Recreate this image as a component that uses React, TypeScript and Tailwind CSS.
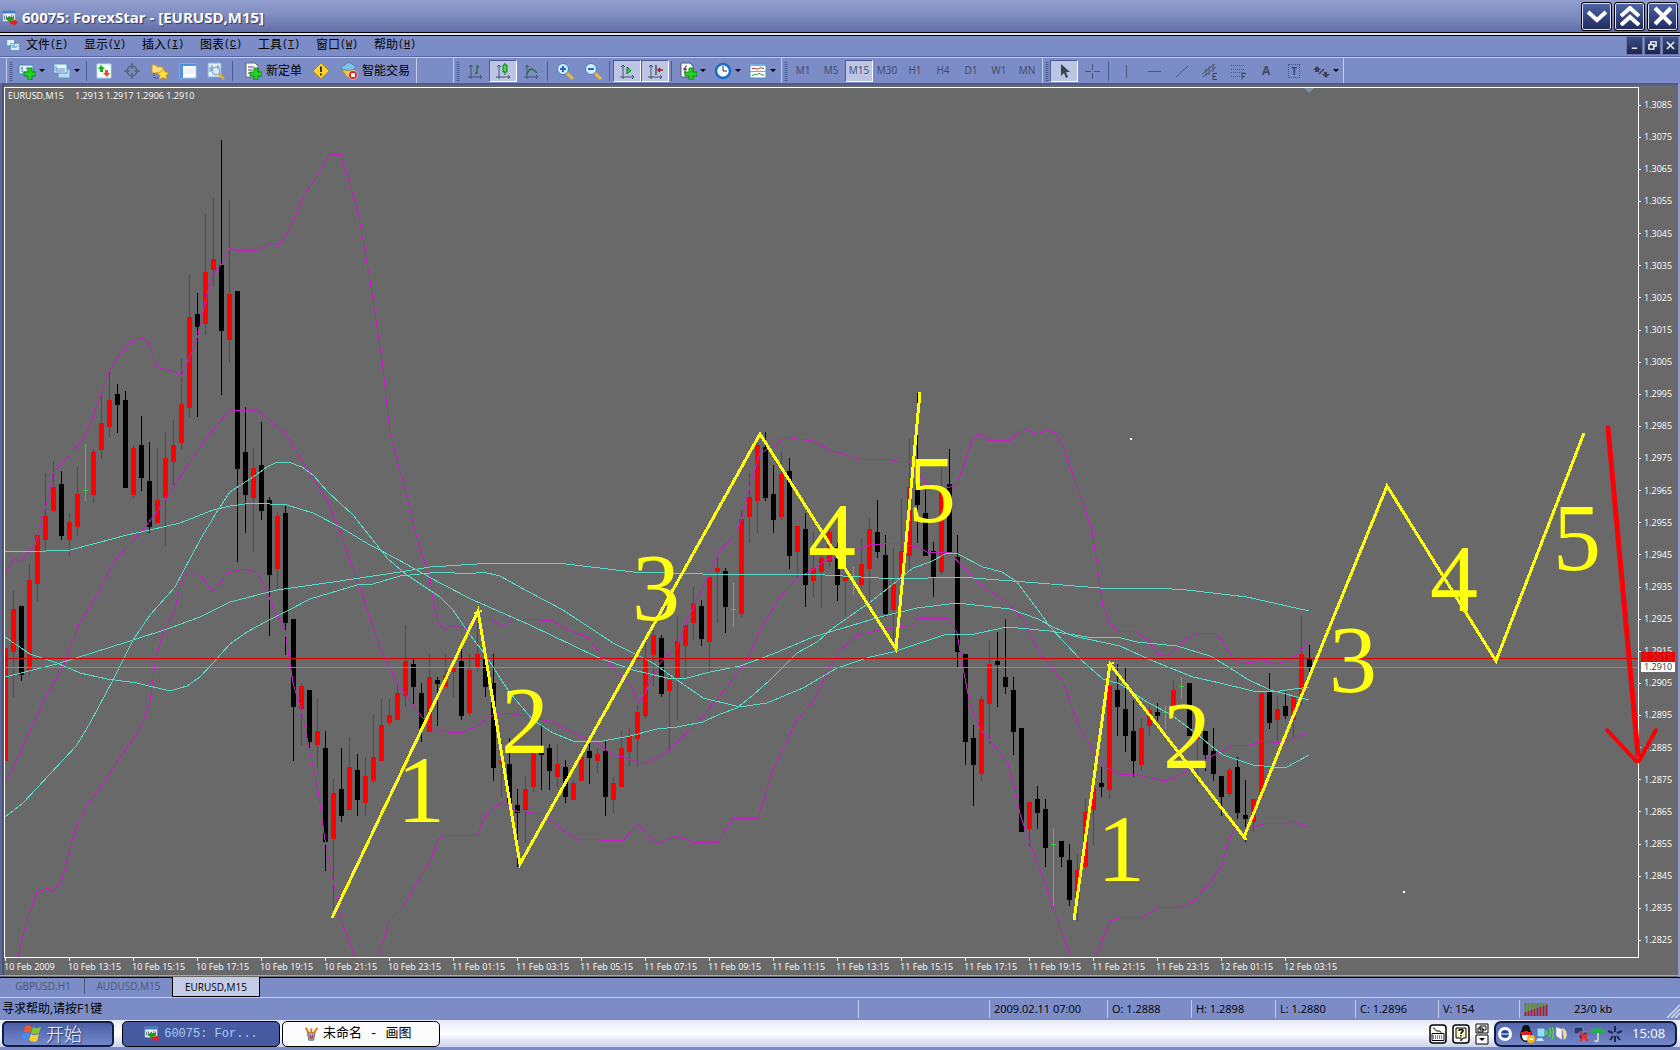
import clsx from "clsx"
import type { ReactNode } from "react"

// r = up bar, k = down bar, g = doji. [type, high, body top, body bottom, low]
type Candle = [string, number, number, number, number]

const candles: Candle[] = [
  ["r", 648, 648, 761, 761], ["r", 591, 609, 652, 697], ["k", 606, 606, 675, 681], ["r", 564, 580, 670, 675],
  ["r", 535, 535, 584, 601], ["r", 473, 516, 540, 549], ["r", 461, 487, 511, 512], ["k", 471, 484, 536, 540],
  ["r", 513, 522, 540, 556], ["r", 467, 494, 527, 536], ["g", 444, 490, 491, 501], ["r", 449, 452, 495, 503],
  ["r", 396, 423, 450, 459], ["r", 372, 400, 427, 437], ["k", 384, 394, 405, 433], ["k", 391, 400, 488, 488],
  ["r", 445, 448, 495, 498], ["k", 416, 445, 478, 491], ["k", 442, 481, 527, 533], ["r", 448, 500, 523, 523],
  ["r", 432, 458, 498, 546], ["r", 420, 445, 462, 485], ["r", 359, 404, 443, 449], ["r", 274, 317, 408, 417],
  ["k", 293, 314, 327, 417], ["r", 214, 272, 324, 335], ["r", 198, 259, 270, 287], ["k", 140, 265, 331, 395],
  ["r", 200, 294, 340, 363], ["k", 291, 291, 469, 562], ["k", 407, 452, 495, 533], ["r", 448, 468, 498, 552],
  ["k", 422, 465, 511, 520], ["k", 497, 500, 575, 636], ["r", 512, 516, 569, 589], ["k", 506, 513, 623, 655],
  ["k", 619, 619, 707, 761], ["r", 683, 686, 709, 745], ["k", 690, 690, 742, 749], ["r", 698, 731, 745, 768],
  ["k", 731, 748, 842, 871], ["r", 779, 793, 839, 910], ["k", 748, 789, 816, 822], ["r", 737, 767, 810, 810],
  ["k", 754, 770, 800, 816], ["r", 757, 776, 803, 816], ["r", 714, 757, 781, 783], ["r", 699, 725, 761, 761],
  ["r", 699, 715, 723, 726], ["r", 683, 693, 720, 720], ["r", 625, 661, 696, 707], ["k", 658, 664, 687, 704],
  ["k", 683, 693, 729, 742], ["r", 654, 677, 732, 732], ["k", 677, 680, 684, 726], ["r", 654, 675, 687, 687],
  ["r", 660, 667, 672, 697], ["k", 647, 661, 716, 720], ["r", 654, 670, 713, 716], ["r", 612, 654, 668, 672],
  ["k", 657, 659, 687, 697], ["k", 654, 683, 768, 781], ["r", 740, 760, 764, 797], ["k", 738, 764, 803, 803],
  ["k", 789, 805, 813, 867], ["r", 776, 789, 810, 843], ["r", 753, 753, 787, 792], ["k", 725, 751, 755, 790],
  ["k", 744, 748, 771, 790], ["r", 744, 764, 777, 788], ["k", 760, 767, 797, 803], ["r", 780, 783, 800, 800],
  ["r", 753, 757, 781, 781], ["k", 742, 751, 758, 784], ["r", 748, 754, 761, 773], ["k", 741, 751, 797, 816],
  ["r", 777, 783, 800, 813], ["r", 731, 748, 787, 787], ["r", 728, 736, 752, 767], ["r", 705, 712, 739, 767],
  ["r", 640, 659, 716, 719], ["r", 630, 635, 655, 687], ["k", 635, 638, 694, 697], ["r", 675, 680, 691, 751],
  ["r", 616, 641, 679, 720], ["r", 623, 625, 646, 677], ["r", 587, 603, 623, 640], ["k", 600, 606, 639, 646],
  ["r", 577, 577, 642, 673], ["r", 557, 568, 572, 623], ["k", 568, 571, 607, 633], ["g", 583, 609, 610, 627],
  ["r", 510, 519, 614, 617], ["r", 473, 497, 517, 543], ["r", 440, 445, 501, 533], ["k", 432, 447, 498, 501],
  ["k", 465, 494, 520, 533], ["r", 452, 474, 517, 520], ["k", 458, 471, 556, 569], ["r", 526, 526, 552, 577],
  ["k", 513, 529, 585, 607], ["r", 532, 568, 581, 597], ["r", 547, 558, 572, 608], ["r", 523, 532, 562, 567],
  ["k", 543, 547, 585, 601], ["r", 573, 577, 581, 617], ["g", 567, 580, 581, 595], ["r", 538, 564, 585, 588],
  ["r", 518, 529, 569, 603], ["k", 500, 532, 552, 558], ["k", 535, 555, 614, 617], ["r", 548, 584, 610, 647],
  ["r", 499, 551, 580, 580], ["r", 439, 487, 556, 570], ["k", 393, 484, 505, 543], ["k", 488, 513, 556, 556],
  ["k", 542, 551, 577, 597], ["r", 463, 490, 572, 575], ["k", 449, 484, 552, 552], ["k", 535, 557, 652, 668],
  ["k", 654, 654, 742, 765], ["k", 725, 738, 765, 806], ["r", 696, 699, 774, 781], ["r", 640, 664, 704, 744],
  ["k", 632, 661, 665, 707], ["k", 619, 677, 687, 694], ["k", 677, 690, 732, 755], ["k", 728, 728, 832, 832],
  ["r", 802, 802, 829, 847], ["k", 786, 799, 813, 829], ["k", 799, 809, 848, 867], ["g", 828, 844, 845, 906],
  ["k", 841, 841, 857, 867], ["k", 844, 860, 900, 906], ["r", 854, 870, 900, 921], ["r", 799, 812, 867, 867],
  ["r", 766, 788, 810, 845], ["k", 767, 783, 787, 797], ["r", 686, 686, 790, 799], ["k", 664, 690, 707, 736],
  ["k", 667, 709, 736, 752], ["k", 700, 731, 761, 777], ["r", 719, 728, 765, 771], ["r", 706, 710, 726, 736],
  ["k", 703, 712, 716, 721], ["g", 706, 712, 713, 729], ["r", 680, 690, 710, 710], ["g", 677, 686, 687, 699],
  ["k", 683, 683, 736, 736], ["r", 732, 736, 739, 784], ["k", 731, 731, 755, 771], ["k", 728, 751, 774, 781],
  ["k", 776, 776, 797, 816], ["r", 768, 770, 794, 797], ["k", 757, 767, 813, 819], ["k", 780, 815, 819, 842],
  ["r", 799, 799, 822, 832], ["r", 693, 693, 797, 797], ["k", 673, 692, 723, 729], ["r", 696, 709, 720, 741],
  ["k", 690, 706, 716, 719], ["r", 697, 697, 720, 737], ["r", 616, 654, 696, 706], ["k", 645, 658, 667, 680],
]

const candleColor: Record<string, string> = { r: "#ff0000", k: "#000000", g: "#20e020" }

// Bollinger bands
const bands = [
  "5,575 14,558 20,562 35,545 42,520 50,490 53,473 62,463 80,443 87,432 100,397 109,372 120,353 132,341 142,338 148,342 157,367 163,369 176,372 181,378 185,367 192,352 198,335 206,298 212,275 222,264 230,248 235,250 255,251 271,243 279,245 288,232 297,212 305,193 317,177 328,156 333,154 340,154 348,178 358,212 370,280 382,360 390,433 407,497 418,542 430,577 433,600 438,622 445,630 452,625 467,629 478,620 490,619 503,626 512,619 527,619 553,621 570,631 587,637 600,653 617,672 630,683 639,704 645,693 650,682 660,663 677,647 687,620 697,600 708,577 718,553 737,533 742,517 748,493 755,470 760,453 777,445 783,437 813,441 832,451 862,460 887,459 902,462 909,461 918,473 930,487 950,487 957,483 965,462 973,438 980,434 988,440 1010,441 1023,429 1038,434 1047,430 1055,433 1063,446 1077,486 1092,530 1098,571 1103,607 1111,625 1118,632 1135,631 1147,639 1158,654 1167,656 1175,650 1187,638 1200,633 1215,634 1222,640 1233,659 1240,664 1253,662 1262,659 1273,664 1290,661 1300,652 1308,641",
  "5,783 20,753 43,702 62,668 80,622 97,595 115,560 143,530 163,503 180,477 207,437 230,410 257,410 285,433 308,470 327,500 343,540 360,588 380,647 397,683 422,717 433,728 450,733 463,732 480,725 487,717 507,713 527,716 553,722 573,733 597,743 613,755 623,757 643,764 667,752 697,723 727,687 747,660 760,630 780,597 797,578 807,573 827,560 847,553 870,545 897,543 917,547 927,552 950,553 963,567 983,587 1007,602 1023,620 1038,650 1063,682 1080,729 1093,750 1107,768 1120,774 1137,775 1165,781 1180,775 1203,761 1233,745 1250,745 1263,741 1280,743 1308,733",
  "18,957 25,927 37,892 48,888 53,892 62,880 70,848 78,823 88,803 100,788 120,757 133,740 143,722 150,702 155,663 163,633 175,610 182,577 190,573 202,577 213,592 228,573 243,569 257,572 265,587 273,607 285,630 293,683 302,713 310,753 318,790 325,840 335,890 342,923 355,956",
  "377,956 383,942 390,920 403,907 417,882 430,862 438,840 445,835 477,836 485,816 502,802 517,811 543,814 563,830 577,839 623,841 638,823 655,844 677,836 692,842 717,843 733,818 758,818 773,770 797,720 813,702 827,672 840,650 858,635 880,630 912,625 917,618 948,618 957,633 963,668 970,704 980,729 992,743 1008,764 1015,789 1020,814 1030,843 1047,889 1070,956",
  "1096,956 1110,921 1123,917 1142,917 1160,907 1177,908 1193,902 1210,882 1222,866 1227,846 1235,827 1253,827 1267,823 1287,823 1293,821 1308,827",
]

// moving averages
const averages = [
  "5,677 57,664 127,642 170,628 200,617 230,602 277,590 333,582 400,572 430,567 493,563 558,563 633,572 703,574 807,574 897,579 960,577 1038,583 1100,588 1157,588 1187,590 1247,597 1309,611",
  "5,551 22,552 70,550 97,543 127,535 150,530 180,523 213,510 230,506 253,503 287,505 313,513 340,527 370,545 397,559 440,583 473,600 530,625 597,657 633,670 667,678 687,678 710,672 740,666 773,654 813,637 880,617 917,608 957,603 1010,609 1038,619 1053,627 1073,636 1120,646 1153,661 1193,677 1220,683 1253,691 1280,691 1309,687",
  "5,637 30,654 57,663 80,673 107,679 137,683 170,691 187,686 200,677 213,663 230,644 247,632 267,621 287,611 310,599 357,585 373,584 400,576 440,572 470,574 483,572 500,576 527,591 563,610 613,643 653,663 680,682 703,698 740,707 767,703 803,688 837,668 870,657 893,652 947,634 970,635 1007,627 1050,631 1087,637 1117,637 1137,642 1177,646 1210,656 1227,666 1247,679 1270,690 1309,700",
  "5,817 23,803 77,745 90,723 113,680 133,640 150,615 175,587 200,540 218,510 230,492 253,477 267,467 277,462 288,462 302,467 313,475 328,492 353,515 388,559 407,575 440,597 453,610 470,635 487,657 500,678 510,693 533,720 553,733 573,741 603,741 630,736 657,729 677,727 703,722 720,714 737,708 753,695 770,680 797,653 817,642 833,628 873,600 897,581 913,568 930,562 947,553 958,554 983,567 1002,572 1017,582 1038,610 1050,627 1080,659 1103,679 1120,684 1147,702 1170,714 1197,734 1210,745 1223,755 1253,765 1285,768 1309,755",
]

const waves: [string, number, number][] = [
  ["1", 421, 822], ["2", 525, 753], ["3", 656, 620], ["4", 832, 569], ["5", 932, 522],
  ["1", 1121, 881], ["2", 1187, 768], ["3", 1353, 692], ["4", 1454, 611], ["5", 1577, 570],
]

const times = [
  "10 Feb 2009", "10 Feb 13:15", "10 Feb 15:15", "10 Feb 17:15", "10 Feb 19:15", "10 Feb 21:15", "10 Feb 23:15",
  "11 Feb 01:15", "11 Feb 03:15", "11 Feb 05:15", "11 Feb 07:15", "11 Feb 09:15", "11 Feb 11:15", "11 Feb 13:15",
  "11 Feb 15:15", "11 Feb 17:15", "11 Feb 19:15", "11 Feb 21:15", "11 Feb 23:15", "12 Feb 01:15", "12 Feb 03:15",
]

const prices = Array.from({ length: 27 }, (_, i) => (1.3085 - i * 0.001).toFixed(4))

const Chart = () => (
  <svg viewBox="0 83 1680 894" className="block w-full h-auto" role="img" aria-label="EURUSD,M15">
    <rect x="0" y="83" width="1680" height="894" fill="#696969" />
    <rect x="0" y="83" width="1680" height="2" fill="#515a80" />
    <rect x="0" y="83" width="2" height="894" fill="#5b6799" />
    <rect x="2" y="85" width="2" height="892" fill="#4c5268" />
    <rect x="1678" y="83" width="2" height="894" fill="#8f9bd0" />
    <rect x="0" y="975" width="1680" height="1" fill="#9aa6d6" />
    <g shapeRendering="crispEdges">
      {candles.map(([type, high, top, bottom, low], i) => (
        <g key={i} fill={candleColor[type]}>
          <rect x={5 + i * 8} y={high} width="1" height={low - high} />
          <rect x={i === 0 ? 5 : 3 + i * 8} y={top} width={i === 0 ? 3 : 5} height={bottom - top} />
        </g>
      ))}
    </g>
    <g fill="none" stroke="#c41fc4" strokeWidth="1" shapeRendering="crispEdges">
      {bands.map((points) => <polyline key={points} points={points} />)}
    </g>
    <g fill="none" stroke="#56dcc6" strokeWidth="1" shapeRendering="crispEdges">
      {averages.map((points) => <polyline key={points} points={points} />)}
    </g>
    <g shapeRendering="crispEdges">
      <rect x="5" y="658" width="1633" height="1" fill="#d40000" />
      <rect x="5" y="667" width="1633" height="1" fill="#778fae" />
      <path d="M5 87.5H1638.5V957.5H4.5V87" fill="none" stroke="#fff" />
      {prices.map((price, i) => <rect key={price} x="1638" y={Math.round(104.6 + i * 32.13)} width="3" height="1" fill="#fff" />)}
      {times.map((time, i) => <rect key={time} x={5 + i * 64} y="957" width="1" height="4" fill="#fff" />)}
      <rect x="1130" y="438" width="2" height="2" fill="#fff" />
      <rect x="1403" y="891" width="2" height="2" fill="#fff" />
    </g>
    <path d="M1304 88h10l-5 5z" fill="#7391aa" />
    <g fill="#fff" className="text-[9px] font-['Open_Sans','DejaVu_Sans',sans-serif]">
      <text x="8" y="99">EURUSD,M15</text>
      <text x="75" y="99">1.2913 1.2917 1.2906 1.2910</text>
      {prices.map((price, i) => <text key={price} x="1644" y={Math.round(108 + i * 32.13)}>{price}</text>)}
      {times.map((time, i) => <text key={time} x={4 + i * 64} y="970">{time}</text>)}
      <rect x="1641" y="652" width="34" height="10" fill="#f00000" />
      <text x="1644" y="661" fill="#b04040">1.2913</text>
      <rect x="1641" y="662" width="34" height="10" fill="#fff" />
      <text x="1644" y="670" fill="#333">1.2910</text>
    </g>
    <g fill="none" stroke="#ffff10" strokeWidth="3" shapeRendering="crispEdges">
      <polyline points="332,918 478,611 520,864 760,434 896,649 920,392" />
      <polyline points="1074,920 1110,664 1244,837 1387,486 1496,661 1584,433" />
      <path d="M474 613l8 -2M1107 665l7 -2M1241 834l6 6" strokeWidth="2" />
    </g>
    <g fill="#ffff10" textAnchor="middle" className="text-[96px] font-['Liberation_Serif',serif]">
      {waves.map(([label, x, y]) => <text key={`${label}${x}`} x={x} y={y}>{label}</text>)}
    </g>
    <g fill="none" stroke="#fb0007" strokeLinecap="round" strokeLinejoin="round">
      <path d="M1608 428L1638 755" strokeWidth="5" />
      <path d="M1607 730L1636 761h3L1656 730" strokeWidth="4" />
    </g>
  </svg>
)

const Icon = ({ children, size = 18 }: { children: ReactNode; size?: number }) => (
  <svg width={size} height={size} viewBox="0 0 18 18" fill="none" aria-hidden="true" className="shrink-0">{children}</svg>
)

const Plus = () => <path d="M10 6h4v4h4v4h-4v4h-4v-4H6v-4h4z" fill="#1fd41f" stroke="#0b7a0b" strokeWidth="0.8" />

const Axes = ({ children }: { children: ReactNode }) => (
  <Icon>
    <path d="M5 3v14M2 15h14M3 5l2 -2l2 2M14 13l2 2l-2 2" stroke="#44506c" />
    {children}
  </Icon>
)

const TermIcon = () => (
  <Icon size={16}>
    <path d="M1 1h14v12H1z" fill="#fff" stroke="#5c84c0" strokeWidth="0.8" />
    <path d="M1 1h14v3H1z" fill="#3c7ad8" />
    <path d="M3 6v5M5 6v5M11 5v5M13 6v4" stroke="#4a566c" />
    <path d="M4 10l5 -4v2h4v4H9v2z" fill="#18a018" />
    <path d="M18 14l-5 -4v2H9v4h4v2z" fill="#e02020" />
  </Icon>
)

type ToolProps = { label: string; pressed?: boolean; arrow?: boolean; children: ReactNode }

const Tool = ({ label, pressed, arrow, children }: ToolProps) => (
  <button
    aria-label={label}
    title={label}
    className={clsx(
      "flex h-[22px] items-center justify-center border",
      arrow ? "w-[35px] gap-[3px]" : "w-[28px]",
      pressed ? "border-[#4a5a94] border-r-white border-b-white bg-[#bcc6e4]" : "border-transparent",
    )}
  >
    {children}
    {arrow && <svg width="6" height="3" aria-hidden="true"><path d="M0 0h6L3 3z" fill="#000" /></svg>}
  </button>
)

const Sep = () => <span className="mx-[2px] h-[20px] w-[2px] border-l border-[#4b5a92]" />

const Group = ({ children, end }: { children: ReactNode; end?: boolean }) => (
  <div className={clsx("mr-px flex h-[25px] items-center border-l border-l-[#c5cdec]", end && "border-r border-r-[#c5cdec]")}>
    <svg width="7" height="20" aria-hidden="true" className="shrink-0">
      <path d="M4 1V20" stroke="#4b5a92" strokeWidth="3" strokeDasharray="1 1" />
    </svg>
    {children}
  </div>
)

const periods = ["M1", "M5", "M15", "M30", "H1", "H4", "D1", "W1", "MN"]

const Toolbar = () => (
  <div className="flex h-[25px] items-center overflow-hidden pl-[6px]">
    <Group end>
      <Tool label="新图表" arrow>
        <Icon>
          <path d="M1 3h14v9H1z" fill="#dff1fb" stroke="#3f86b8" />
          <path d="M4 5v5h7M3 6h2M9 5v3" stroke="#3f86b8" />
          <Plus />
        </Icon>
      </Tool>
      <Tool label="配置文件" arrow>
        <Icon>
          <path d="M5 7h12v9H5z" fill="#b9dcf2" stroke="#5b8fc0" />
          <path d="M1 2h13v9H1z" fill="#e6f4fc" stroke="#5b8fc0" />
          <path d="M3 4v5h9M3 7h9" stroke="#5b8fc0" />
        </Icon>
      </Tool>
      <Sep />
      <Tool label="市场报价">
        <Icon>
          <path d="M2 2h14v14H2z" fill="#fff" stroke="#a8d8f0" />
          <path d="M3 7l3 -4l4 4H8v3H5V7z" fill="#16b016" />
          <path d="M15 11l-3 4l-4 -4h2V8h3v3z" fill="#f0501c" />
        </Icon>
      </Tool>
      <Tool label="数据窗口">
        <Icon>
          <circle cx="9" cy="9" r="5" stroke="#5a6478" strokeWidth="1.5" />
          <path d="M9 1v6M9 11v6M1 9h6M11 9h6" stroke="#5a6478" strokeWidth="1.5" />
        </Icon>
      </Tool>
      <Tool label="导航">
        <Icon>
          <path d="M1 3h4l1 2h6v6H1z" fill="#ffe27a" stroke="#c99a20" />
          <path d="M3 11v5h4" stroke="#333" strokeDasharray="1 1" />
          <path d="M12 6l2 4l4 .5l-3 3l1 4l-4 -2l-4 2l1 -4l-3 -3l4 -.5z" fill="#ffdf3a" stroke="#c58a10" strokeWidth="0.7" />
        </Icon>
      </Tool>
      <Tool label="终端">
        <Icon>
          <path d="M1 2h16v14H1z" fill="#fff" stroke="#8fc8f0" />
          <path d="M1 2h16v2H1zM1 2h3v14H1z" fill="#4a92e0" />
          <path d="M6 7h9M6 9h9M6 11h9" stroke="#cdd6e6" strokeWidth="0.7" />
        </Icon>
      </Tool>
      <Tool label="策略测试">
        <Icon>
          <path d="M1 1h13v14H1z" fill="#e4f1fa" stroke="#7ab0d8" />
          <path d="M3 5v5M5 3v6M11 3v5" stroke="#3f86b8" />
          <circle cx="9" cy="9" r="4" fill="#cfe8fa" fillOpacity="0.8" stroke="#7898b8" />
          <path d="M12 12l5 5" stroke="#e0b030" strokeWidth="2.5" />
        </Icon>
      </Tool>
      <Sep />
      <button className="flex h-[22px] items-center gap-1 pl-[8px] pr-[5px] text-[12px] whitespace-nowrap">
        <Icon>
          <path d="M2 1h9l3 3v11H2z" fill="#fff" stroke="#667" />
          <path d="M4 5h6M4 8h5M4 11h3" stroke="#445" />
          <Plus />
        </Icon>
        新定单
      </button>
      <Tool label="警报">
        <Icon>
          <path d="M9 1l8 8l-8 8l-8 -8z" fill="#fbd332" stroke="#b88a10" />
          <path d="M9 4.500v5.500M9 11.500v2" stroke="#4a3200" strokeWidth="2" />
        </Icon>
      </Tool>
      <button className="flex h-[22px] items-center gap-1 pl-[5px] pr-[6px] text-[12px] whitespace-nowrap">
        <Icon>
          <path d="M2 8c3 -2 10 -2 13 0l-3 7H7z" fill="#f2c14a" stroke="#9a7420" strokeWidth="0.6" />
          <path d="M1 6c0 -2 3 -2 4 -3c2 -3 6 -3 8 0c1 1 3 1 3 3c-4 3 -11 3 -15 0z" fill="#7cc4ee" stroke="#2a78b0" strokeWidth="0.7" />
          <circle cx="13" cy="13" r="4.500" fill="#e02418" stroke="#fff" strokeWidth="0.6" />
          <path d="M11 11h4v4h-4z" fill="#fff" />
        </Icon>
        智能交易
      </button>
    </Group>
    <div className="w-[35px]" />
    <Group>
      <Tool label="柱状图"><Axes><path d="M11 3v9M9 11h2M11 5h2" stroke="#2a7038" strokeWidth="1.500" /></Axes></Tool>
      <Tool label="阴阳烛" pressed><Axes><path d="M11 1v12" stroke="#0a7a1a" /><path d="M9 3h4v7H9z" fill="#3fe04a" stroke="#0a7a1a" /></Axes></Tool>
      <Tool label="折线图"><Axes><path d="M5 12c3 -7 5 -6 10 -1" stroke="#2a7038" strokeWidth="1.500" /></Axes></Tool>
      <Sep />
      <Tool label="放大">
        <Icon>
          <path d="M11 11l6 6" stroke="#e8bc38" strokeWidth="3" />
          <circle cx="7" cy="7" r="5.500" fill="#d4ecff" stroke="#3f7fc8" />
          <path d="M4 7h6M7 4v6" stroke="#2a66c0" strokeWidth="2" />
        </Icon>
      </Tool>
      <Tool label="缩小">
        <Icon>
          <path d="M11 11l6 6" stroke="#e8bc38" strokeWidth="3" />
          <circle cx="7" cy="7" r="5.500" fill="#d4ecff" stroke="#3f7fc8" />
          <path d="M4 7h6" stroke="#2a66c0" strokeWidth="2" />
        </Icon>
      </Tool>
      <Sep />
      <Tool label="自动滚动" pressed><Axes><path d="M9 5l4 3.500l-4 3.500z" fill="#39d048" stroke="#0a7a1a" /></Axes></Tool>
      <Tool label="图表平移" pressed><Axes><path d="M10 3v10" stroke="#44506c" strokeWidth="1.500" /><path d="M17 8h-5M14 6l-2 2l2 2" stroke="#b01818" strokeWidth="1.500" /></Axes></Tool>
      <Sep />
      <Tool label="技术指标" arrow>
        <Icon>
          <path d="M2 1h9l3 3v11H2z" fill="#fff" stroke="#556" />
          <path d="M8 4c-2 0 -2 1 -2 3v5M4 7h4" stroke="#222" />
          <Plus />
        </Icon>
      </Tool>
      <Tool label="周期" arrow>
        <Icon>
          <circle cx="9" cy="9" r="7" fill="#f2f9ff" stroke="#1b6bc4" strokeWidth="2.500" />
          <path d="M9 4v5h4" stroke="#333" />
        </Icon>
      </Tool>
      <Tool label="模板" arrow>
        <Icon>
          <path d="M1 2h16v14H1z" fill="#fff" stroke="#4a92c8" />
          <path d="M1 2h16v2H1zM1 9h16v1H1z" fill="#6ab0e0" />
          <path d="M3 7c3 -2 4 1 6 0s3 -2 6 0" stroke="#a02020" />
          <path d="M3 14c3 -3 4 0 6 -2s3 2 6 1" stroke="#208030" />
        </Icon>
      </Tool>
    </Group>
    <Group>
      {periods.map((period) => (
        <Tool key={period} label={period} pressed={period === "M15"}>
          <span className="text-[10px] text-[#3f4a66]">{period}</span>
        </Tool>
      ))}
    </Group>
    <Group end>
      <Tool label="光标" pressed><Icon><path d="M6 2v12l3 -3l2 5l2 -1l-2 -5h4z" fill="#3c4250" /></Icon></Tool>
      <Tool label="十字准线"><Icon><path d="M9.500 2v6M9.500 11v6M2 9.500h6M11 9.500h6" stroke="#4c5674" /></Icon></Tool>
      <Sep />
      <Tool label="垂直线"><Icon><path d="M9.500 3v13" stroke="#4c5674" /></Icon></Tool>
      <Tool label="水平线"><Icon><path d="M3 9.500h13" stroke="#4c5674" /></Icon></Tool>
      <Tool label="趋势线"><Icon><path d="M3 15L15 4" stroke="#4c5674" /></Icon></Tool>
      <Tool label="等距通道">
        <Icon>
          <path d="M1 12L14 2M2 15L15 5M5 6v8M8 4v9M12 2v8" stroke="#4c5674" />
          <path d="M16 11.500h-4v6h4M12 14.500h3" stroke="#3c4250" />
        </Icon>
      </Tool>
      <Tool label="斐波纳契回调线">
        <Icon>
          <path d="M2 3.500h14M2 7.500h14M2 10.500h14M2 14.500h9" stroke="#4c5674" strokeDasharray="1 1" />
          <path d="M17 11.500h-4v6M13 14.500h3" stroke="#3c4250" />
        </Icon>
      </Tool>
      <Tool label="文字"><span className="text-[12px] font-bold text-[#3f4a66]">A</span></Tool>
      <Tool label="文字标签">
        <span className="border border-dotted border-[#4c5674] px-[2px] text-[10px] leading-[12px] font-bold text-[#3f4a66]">T</span>
      </Tool>
      <Tool label="箭头" arrow>
        <Icon>
          <path d="M5 4l4 4H7v2H3V8H1zM14 16l-4 -4h2v-2h3v2h3z" fill="#3c4250" />
          <path d="M7 12l5 -5" stroke="#3c4250" strokeWidth="1.500" />
        </Icon>
      </Tool>
    </Group>
  </div>
)

const menus = [["文件", "F"], ["显示", "V"], ["插入", "I"], ["图表", "C"], ["工具", "T"], ["窗口", "W"], ["帮助", "H"]]

const TitleButton = ({ label, d, small }: { label: string; d: string; small?: boolean }) => (
  <button
    aria-label={label}
    className={clsx(
      "flex items-center justify-center bg-linear-to-b",
      small
        ? "h-[19px] w-[17px] border border-[#6877a8] from-[#3d4d86] to-[#1c2750]"
        : "h-[29px] w-[31px] rounded-[3px] border border-black from-[#5266a8] to-[#1f2a5c] ring-1 ring-inset ring-[#dfe4f4]",
    )}
  >
    <svg width={small ? 9 : 20} height={small ? 9 : 20} viewBox="0 0 20 20" fill="none" aria-hidden="true">
      <path d={d} stroke="#fff" strokeWidth={small ? 3 : 4} />
    </svg>
  </button>
)

const TitleBar = () => (
  <header>
    <div className="flex h-[32px] items-center justify-between bg-linear-to-b from-[#929ece] via-[#7f8cc0] to-[#626da6] pr-[2px] pl-[2px]">
      <div className="flex items-center gap-1 pt-[3px]">
        <TermIcon />
        <h1 className="text-[15px] font-bold text-white font-['Open_Sans',sans-serif] [text-shadow:1px_1px_1px_#2c3568]">
          60075: ForexStar - [EURUSD,M15]
        </h1>
      </div>
      <div className="flex gap-[2px]">
        <TitleButton label="最小化" d="M1 6l9 8l9 -8" />
        <TitleButton label="向下还原" d="M1 10l9 -8l9 8M1 19l9 -8l9 8" />
        <TitleButton label="关闭" d="M2 2l16 16M18 2L2 18" />
      </div>
    </div>
    <div className="h-[4px] border-y border-black bg-[#e4e6ec]" />
    <div className="flex h-[22px] items-start justify-between border-b border-[#c5cdec] pr-px shadow-[inset_0_-1px_0_#5666a0]">
      <nav className="flex items-center pl-[6px]">
        <span className="w-[20px]">
          <Icon size={14}>
            <path d="M1 2h10v8H1zM6 7h11v9H6z" fill="#e8f6ff" stroke="#4a92c8" />
            <path d="M8 13l2 -3l2 3l3 -4" stroke="#2a78b0" />
          </Icon>
        </span>
        {menus.map(([name, key]) => (
          <button key={key} className="flex w-[58px] items-center text-[12px] leading-[18px]">
            {name}
            <span className="font-['Liberation_Mono',monospace] text-[10px]">(<u>{key}</u>)</span>
          </button>
        ))}
      </nav>
      <div className="flex gap-px">
        <TitleButton small label="最小化图表" d="M4 16h12" />
        <TitleButton small label="还原图表" d="M6 7V2h12v9h-5M2 8h11v10H2z" />
        <TitleButton small label="关闭图表" d="M2 2l16 16M18 2L2 18" />
      </div>
    </div>
  </header>
)

const Tabs = () => (
  <div className="flex h-[21px] items-start border-t border-black border-b border-b-[#c5cdec] pl-[2px] text-[10px] leading-[18px] text-[#4b5573]">
    <button className="w-[83px] border-r border-[#4b5573] leading-[16px]">GBPUSD,H1</button>
    <button className="w-[87px] leading-[16px]">AUDUSD,M15</button>
    <button className="-mt-px h-[20px] w-[88px] border border-t-0 border-black bg-[#c3cbe6] text-black">EURUSD,M15</button>
  </div>
)

const Cell = ({ width, children }: { width: string; children?: ReactNode }) => (
  <span className={clsx("flex h-[18px] items-center border-l border-[#c5cdec] pl-[4px]", width)}>{children}</span>
)

const StatusBar = () => (
  <div className="flex h-[22px] items-center text-[11px] whitespace-nowrap">
    <span className="flex-1 pl-[2px] text-[12px]">寻求帮助,请按F1键</span>
    <Cell width="w-[131px]" />
    <Cell width="w-[118px]">2009.02.11 07:00</Cell>
    <Cell width="w-[84px]">O: 1.2888</Cell>
    <Cell width="w-[84px]">H: 1.2898</Cell>
    <Cell width="w-[80px]">L: 1.2880</Cell>
    <Cell width="w-[83px]">C: 1.2896</Cell>
    <Cell width="w-[81px]">V: 154</Cell>
    <Cell width="w-[161px]">
      <svg width="24" height="13" aria-hidden="true">
        <path d="M1.500 0v9M4.500 0v8M7.500 0v7M10.500 0v6M13.500 0v5M16.500 0v4M19.500 0v3M22.500 0v2" stroke="#5c8a2c" strokeWidth="2" />
        <path d="M1.500 9v4M4.500 8v5M7.500 7v6M10.500 6v7M13.500 5v8M16.500 4v9M19.500 3v10M22.500 2v11" stroke="#a02030" strokeWidth="2" />
      </svg>
      <span className="flex-1 pl-[26px]">23/0 kb</span>
      <svg width="14" height="14" aria-hidden="true" className="self-end">
        <path d="M1 14L14 1M5 14l9 -9M9 14l5 -5" stroke="#d5dcf2" strokeWidth="1.500" />
      </svg>
    </Cell>
  </div>
)

const Taskbar = () => (
  <footer className="flex h-[30px] items-start border-b-[3px] border-[#7b8cc6] bg-linear-to-b from-[#e6eaf6] via-white to-[#ccd2ea] pt-px pl-[2px] pr-[3px]">
    <button className="mr-[8px] flex h-[26px] w-[112px] items-center gap-[4px] rounded-[5px] border-2 border-[#101c48] bg-linear-to-b from-[#4a5fa6] to-[#7488cc] pl-[18px] text-[18px] leading-[22px] font-light text-white [text-shadow:1px_1px_1px_#1c2858]">
      <svg width="20" height="18" viewBox="0 0 20 18" aria-hidden="true">
        <path d="M3 2c3 -2 5 -1 7 0L8 8c-2 -1 -4 -2 -7 0z" fill="#f05a28" />
        <path d="M11 2c3 2 5 1 8 0l-2 6c-3 1 -5 2 -8 0z" fill="#7cc832" />
        <path d="M1 9c3 -2 5 -1 7 0l-2 6c-2 -1 -4 -2 -6 0z" fill="#3f8ef0" />
        <path d="M9 9c3 2 5 1 8 0l-2 7c-3 1 -5 1 -8 -1z" fill="#fcd028" />
      </svg>
      开始
    </button>
    <button className="mr-[2px] flex h-[26px] w-[158px] items-center justify-center gap-[4px] rounded-[5px] border border-black bg-[#465aa2] font-['Liberation_Mono',monospace] text-[12px] text-[#a6cdf6]">
      <TermIcon />
      60075: For...
    </button>
    <button className="flex h-[26px] w-[158px] items-center gap-[4px] rounded-[5px] border border-black bg-[#fbfbfe] pl-[22px] font-['Liberation_Mono','Noto_Sans_CJK_SC',monospace] text-[13px] text-black">
      <Icon size={14}>
        <path d="M3 7h10l-2 10H5z" fill="#9fb0c0" stroke="#556" />
        <path d="M5 8L1 1M8 8V2M11 8l5 -7" stroke="#e07818" strokeWidth="2.500" />
        <path d="M6 10l2 5M10 10l-1 5" stroke="#c03030" strokeWidth="1.500" />
      </Icon>
      <span>未命名 - 画图</span>
    </button>
    <div className="ml-auto flex h-[26px] items-center gap-[5px]">
      <svg width="18" height="20" viewBox="0 0 18 20" fill="none" aria-hidden="true">
        <rect x="1" y="1" width="16" height="18" rx="3" fill="#fff" stroke="#000" strokeWidth="1.500" />
        <path d="M4 4c3 0 1 3 5 3c3 0 3 1 3 2M3 9.500h12v7H3z" stroke="#000" />
        <path d="M4 12h10M4 14h10" stroke="#000" strokeDasharray="1 1" />
      </svg>
      <svg width="18" height="20" viewBox="0 0 18 20" fill="none" aria-hidden="true">
        <rect x="1" y="1" width="16" height="18" rx="3" fill="#fff" stroke="#000" strokeWidth="1.500" />
        <path d="M4 4h10v10h-3l-2 3v-3H4z" fill="#fbf7c8" stroke="#000" />
        <path d="M7 7c0 -2 4 -2 4 0c0 1 -2 1 -2 3M9 11v1.500" stroke="#000" strokeWidth="1.500" />
      </svg>
      <svg width="14" height="22" viewBox="0 0 14 22" fill="none" aria-hidden="true">
        <path d="M1 1h12v9H1zM1 12h12v9H1z" fill="#fff" stroke="#000" />
        <path d="M5 3h6v4H5zM3 5h5v4H3z" fill="#fff" stroke="#000" />
        <path d="M4 15h6l-3 3z" fill="#000" />
      </svg>
      <div className="flex h-[26px] w-[183px] items-center rounded-[7px] border-2 border-[#101c48] bg-linear-to-b from-[#5669ae] to-[#7386c8] text-[13px] text-white">
        <svg width="136" height="20" viewBox="0 0 136 20" fill="none" aria-hidden="true">
          <circle cx="9" cy="10" r="7" fill="#fff" />
          <circle cx="9" cy="10" r="4" fill="#2348a0" />
          <path d="M3 10h12" stroke="#fff" />
          <ellipse cx="30" cy="11" rx="6" ry="7" fill="#111" />
          <circle cx="30" cy="5" r="4" fill="#111" />
          <ellipse cx="30" cy="12" rx="4" ry="4.500" fill="#fff" />
          <path d="M25 8h10v3H25z" fill="#e02020" />
          <circle cx="35" cy="15" r="4" fill="#f8b818" />
          <path d="M33 15h4" stroke="#fff" strokeWidth="1.500" />
          <path d="M41 4h8v9h-8z" fill="#9adcf8" stroke="#3c78b8" />
          <path d="M40 17h8l-2 -3h-4z" fill="#c4e8fa" />
          <path d="M50 6c1 2 1 3 0 5M53 4c2 3 2 6 0 9M56 3c2 4 2 8 0 12" stroke="#52e03c" strokeWidth="1.500" />
          <path d="M60 3l6 2v11l-6 -4z" fill="#f4f4f4" stroke="#888" strokeWidth="0.5" />
          <path d="M66 4c5 1 7 8 2 12z" fill="#f0d8a0" />
          <path d="M78 3h9v7h-9zM83 8h8v7h-8z" fill="#28386c" stroke="#7890c8" />
          <path d="M84 9l8 8M92 9l-8 8" stroke="#e83030" strokeWidth="2.500" />
          <path d="M94 10c1 -8 15 -8 16 0c-2 -2 -3 -2 -5 0c-2 -2 -4 -2 -6 0c-2 -2 -3 -2 -5 0z" fill="#22b04a" />
          <path d="M102 9v7c0 2 -3 2 -3 0" stroke="#d8e8c0" strokeWidth="1.500" />
          <path d="M119 2v6M119 12v6M112 7l5 2M126 7l-5 2M114 16l3 -4M124 16l-3 -4" stroke="#1c2850" strokeWidth="2" />
        </svg>
        <time>15:08</time>
      </div>
    </div>
  </footer>
)

export default function App() {
  return (
    <div className="flex min-h-screen w-full flex-col bg-[#7b8cc6] text-black font-['Open_Sans','Noto_Sans_CJK_SC',sans-serif]">
      <TitleBar />
      <Toolbar />
      <main><Chart /></main>
      <Tabs />
      <StatusBar />
      <Taskbar />
    </div>
  )
}
